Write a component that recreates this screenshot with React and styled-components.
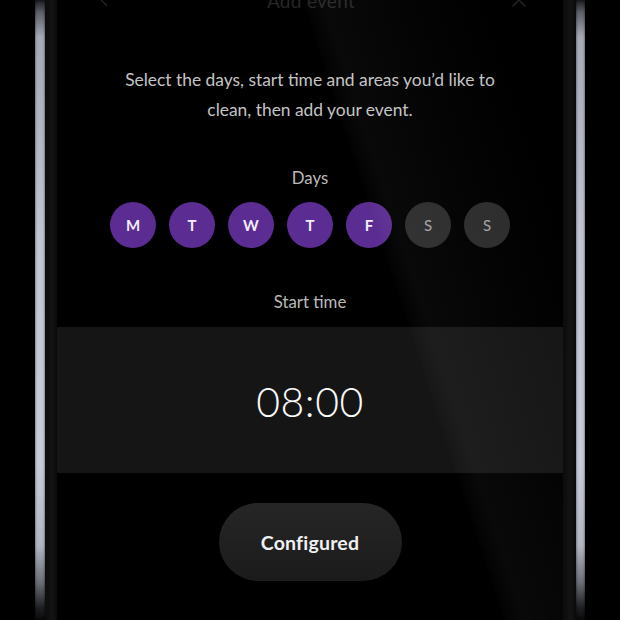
import React from "react";
import styled, { createGlobalStyle } from "styled-components";
import { ChevronLeft, X } from "lucide-react";

const Global = createGlobalStyle`
  html, body { margin: 0; padding: 0; background: #000; }
  body { font-family: Lato, "Open Sans", sans-serif; }
  * { box-sizing: border-box; }
`;

const Stage = styled.div`
  width: 620px;
  height: 620px;
  overflow: hidden;
  background: #000;
  display: flex;
  padding-left: 35px;
`;

const SilverEdge = styled.div`
  width: ${(p) => p.$w}px;
  flex-shrink: 0;
  background: linear-gradient(
    to bottom,
    #1a1b1e 0%,
    #5d6068 2%,
    #a6aab6 6%,
    #c2c6d3 40%,
    #c8ccd9 75%,
    #b2b6c2 88%,
    #6b6e76 94%,
    #1e1f22 98%,
    #0a0a0a 100%
  );
  box-shadow: inset 1px 0 2px rgba(0, 0, 0, 0.3), inset -1px 0 2px rgba(0, 0, 0, 0.3);
`;

const Bezel = styled.div`
  width: ${(p) => p.$w}px;
  flex-shrink: 0;
  background: linear-gradient(to right, #0c0c0c, #131313 60%, #0a0a0a);
`;

const Screen = styled.div`
  position: relative;
  width: 506px;
  flex-shrink: 0;
  background: #000;
  display: flex;
  flex-direction: column;
  align-items: center;
  &::after {
    content: "";
    position: absolute;
    inset: 0;
    pointer-events: none;
    background: linear-gradient(
      72deg,
      transparent 63%,
      rgba(255, 255, 255, 0.012) 63.5%,
      rgba(255, 255, 255, 0.035) 66%,
      rgba(255, 255, 255, 0.015) 78%,
      rgba(255, 255, 255, 0) 90%
    );
  }
`;

const Header = styled.div`
  width: 100%;
  height: 44px;
  margin-top: -22px;
  display: flex;
  align-items: center;
  justify-content: space-between;
  padding: 0 32px 0 36px;
  color: #232323;
`;

const HeaderTitle = styled.span`
  font-size: 19px;
  color: #262626;
  letter-spacing: 0.3px;
`;

const Intro = styled.p`
  margin: 43px 0 0;
  width: 396px;
  text-align: center;
  font-size: 17.4px;
  line-height: 30px;
  color: #c4c4c4;
`;

const Label = styled.div`
  margin-top: ${(p) => p.$mt}px;
  height: 20px;
  line-height: 20px;
  font-size: 16.8px;
  color: #bababa;
`;

const DayRow = styled.div`
  margin-top: 14px;
  display: flex;
  gap: 13px;
`;

const Day = styled.div`
  width: 46px;
  height: 46px;
  border-radius: 50%;
  display: flex;
  align-items: center;
  justify-content: center;
  font-size: 15px;
  font-weight: ${(p) => (p.$on ? 700 : 400)};
  color: ${(p) => (p.$on ? "#f1ecf8" : "#a5a5a5")};
  background: ${(p) => (p.$on ? "#5b2d92" : "#2c2c2c")};
`;

const TimeBlock = styled.div`
  margin-top: 15px;
  width: 100%;
  height: 146px;
  background: #151515;
  display: flex;
  align-items: center;
  justify-content: center;
`;

const TimeText = styled.span`
  font-size: 41px;
  font-weight: 300;
  color: #fafafa;
  letter-spacing: 0.5px;
  margin-top: 2px;
`;

const Button = styled.button`
  margin-top: 30px;
  width: 183px;
  height: 78px;
  border: none;
  border-radius: 39px;
  background: linear-gradient(to bottom, #262626, #1b1b1b);
  color: #f0f0f0;
  font-family: Lato, sans-serif;
  font-size: 19.5px;
  font-weight: 700;
  letter-spacing: 0.2px;
  padding: 0;
`;

const days = [
  ["M", true],
  ["T", true],
  ["W", true],
  ["T", true],
  ["F", true],
  ["S", false],
  ["S", false],
];

export default function App() {
  return (
    <>
      <Global />
      <Stage>
        <SilverEdge $w={10} />
        <Bezel $w={12} />
        <Screen>
          <Header>
            <ChevronLeft size={22} strokeWidth={1.5} />
            <HeaderTitle>Add event</HeaderTitle>
            <X size={24} strokeWidth={1.5} />
          </Header>
          <Intro>
            Select the days, start time and areas you’d like to clean, then add your event.
          </Intro>
          <Label $mt={43}>Days</Label>
          <DayRow>
            {days.map(([d, on], i) => (
              <Day key={i} $on={on}>
                {d}
              </Day>
            ))}
          </DayRow>
          <Label $mt={44}>Start time</Label>
          <TimeBlock>
            <TimeText>08:00</TimeText>
          </TimeBlock>
          <Button>Configured</Button>
        </Screen>
        <Bezel $w={13} />
        <SilverEdge $w={9} />
      </Stage>
    </>
  );
}
